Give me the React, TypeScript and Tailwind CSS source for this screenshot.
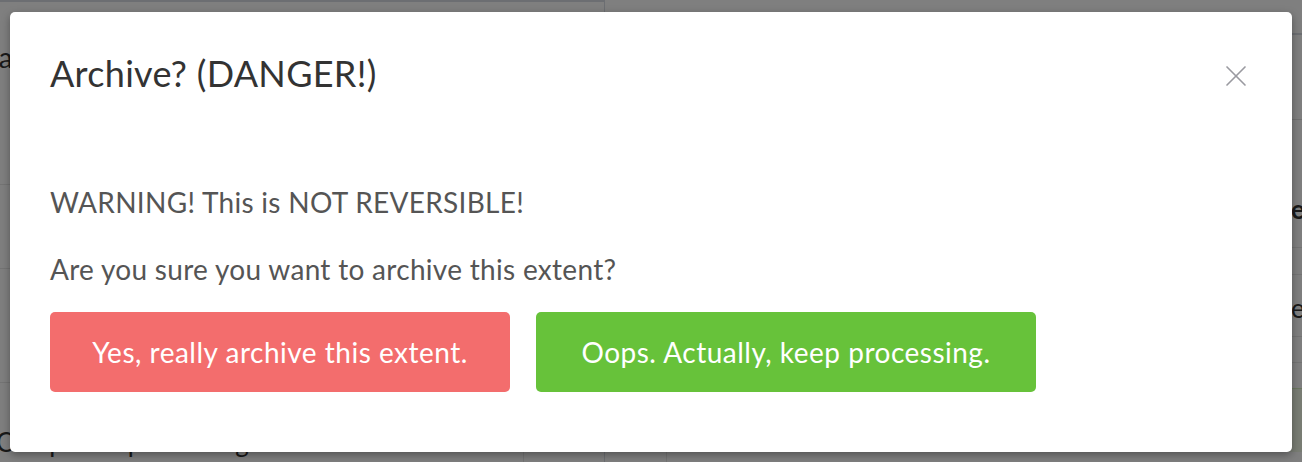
import { X } from 'lucide-react';

export default function App() {
  return (
    <div className="relative w-full h-[462px] overflow-hidden bg-white" style={{ fontFamily: 'Lato, "Open Sans", sans-serif' }}>
      {/* page behind the overlay */}
      <div className="flex h-full">
        <div className="w-[605px] shrink-0 flex flex-col border-r border-[#d8dce4]">
          <div className="h-[2px] bg-[#d8dce4]" />
          <div className="h-[187px] border-b border-[#e8e8e8] pt-[34px]">
            <span className="-ml-[46px] text-[28px] text-[#333]">Data</span>
          </div>
          <div className="h-[87px] border-b border-[#e8e8e8]" />
          <div className="h-[117px] border-b border-[#e8e8e8]" />
          <div className="flex-1 flex">
            <div className="w-[527px] pt-[40px] text-[26px] text-[#333] -ml-[4px]">Completed processing.</div>
            <div className="flex-1 border-l border-[#e8e8e8]" />
          </div>
        </div>
        <div className="flex-1 min-w-0 flex flex-col">
          <div className="h-[35px] border-b-2 border-[#d8dce4]" />
          <div className="h-[85px] border-b border-[#e0e0e0]" />
          <div className="h-[128px] border-b border-[#e8e8e8] pt-[70px] pl-[686px] text-[26px] font-bold text-[#333] whitespace-nowrap">e</div>
          <div className="h-[27px] border-b border-[#e8e8e8]" />
          <div className="h-[62px] border-b border-[#e8e8e8] pt-[14px] pl-[686px] text-[26px] text-[#333] whitespace-nowrap">ec</div>
          <div className="h-[26px] border-b border-[#e8e8e8]" />
          <div className="h-[25px]" />
          <div className="h-[64px] bg-[#f3fbe9] border-t border-[#d7efc0]" />
          <div className="flex-1 flex">
            <div className="w-[62px] border-r border-[#e8e8e8]" />
          </div>
        </div>
      </div>

      {/* overlay */}
      <div className="absolute inset-0 bg-black/50 pt-[12px] px-[10px]">
        <div className="h-[440px] bg-white rounded-[5px] shadow-[0_3px_8px_rgba(0,0,0,0.35)] px-[40px]">
          <div className="flex items-start justify-between pt-[39px]">
            <h1 className="text-[36px] leading-[44px] text-[#333] tracking-[0.3px]">Archive? (DANGER!)</h1>
            <button className="mt-[7px] mr-[-2px] text-[#9a9aa0]">
              <X size={36} strokeWidth={1.1} />
            </button>
          </div>
          <div className="pt-[89px] text-[28px] leading-[36px] text-[#555] tracking-[0.3px]">
            <p>WARNING! This is NOT REVERSIBLE!</p>
            <p className="mt-[31px]">Are you sure you want to archive this extent?</p>
          </div>
          <div className="flex gap-[26px] mt-[25px]">
            <button className="w-[460px] h-[80px] rounded-[5px] bg-[#f36d6d] text-white text-[28px] tracking-[0.5px]">Yes, really archive this extent.</button>
            <button className="w-[500px] h-[80px] rounded-[5px] bg-[#67c23a] text-white text-[28px] tracking-[0.5px]">Oops. Actually, keep processing.</button>
          </div>
        </div>
      </div>
    </div>
  );
}
